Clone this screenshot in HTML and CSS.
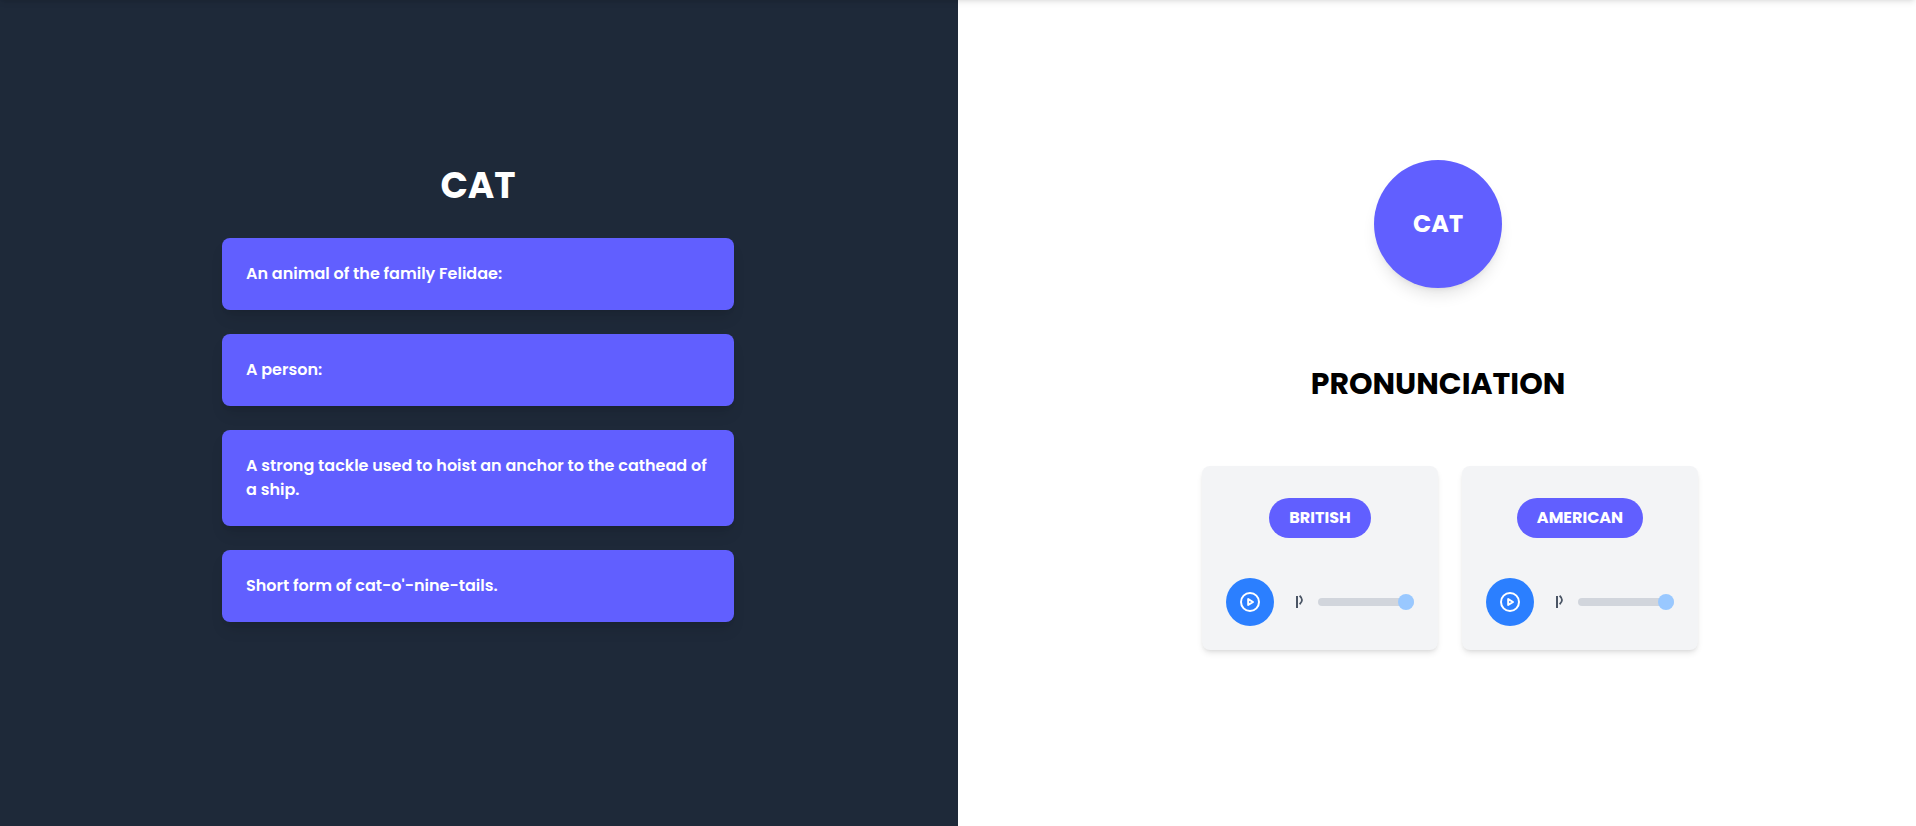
FILE: index.html
```html
<!DOCTYPE html>
<html lang="en">
<head>
<meta charset="utf-8">
<title>Cat</title>
<link rel="stylesheet" href="styles.css">
</head>
<body>
<div class="topbar"></div>
<main class="page">
  <section class="meanings">
    <h1 class="word">CAT</h1>
    <ul class="list">
      <li class="card">An animal of the family Felidae:</li>
      <li class="card">A person:</li>
      <li class="card">A strong tackle used to hoist an anchor to the cathead of a ship.</li>
      <li class="card">Short form of cat-o'-nine-tails.</li>
    </ul>
  </section>
  <section class="sound">
    <div class="circle">CAT</div>
    <h2 class="title">PRONUNCIATION</h2>
    <div class="players">
      <article class="player">
        <div class="pill">BRITISH</div>
        <div class="controls">
          <button class="play" aria-label="Play"><svg width="24" height="24" viewBox="0 0 24 24" fill="none" stroke="currentColor" stroke-width="2" stroke-linecap="round" stroke-linejoin="round"><circle cx="12" cy="12" r="9"/><path d="M10.2 9v6l4.8-3z"/></svg></button>
          <svg class="volume" width="8" height="14" viewBox="0 0 8 14"><path d="M0 1h2v12H0z" fill="currentColor"/><path d="M3.6.8Q8.4 5 3.6 9.2" fill="none" stroke="currentColor" stroke-width="1.8"/></svg>
          <div class="slider"><div class="thumb"></div></div>
        </div>
      </article>
      <article class="player">
        <div class="pill">AMERICAN</div>
        <div class="controls">
          <button class="play" aria-label="Play"><svg width="24" height="24" viewBox="0 0 24 24" fill="none" stroke="currentColor" stroke-width="2" stroke-linecap="round" stroke-linejoin="round"><circle cx="12" cy="12" r="9"/><path d="M10.2 9v6l4.8-3z"/></svg></button>
          <svg class="volume" width="8" height="14" viewBox="0 0 8 14"><path d="M0 1h2v12H0z" fill="currentColor"/><path d="M3.6.8Q8.4 5 3.6 9.2" fill="none" stroke="currentColor" stroke-width="1.8"/></svg>
          <div class="slider"><div class="thumb"></div></div>
        </div>
      </article>
    </div>
  </section>
</main>
</body>
</html>
```
FILE: styles.css
```css
* { box-sizing: border-box; margin: 0; padding: 0; }
body { font-family: Poppins, Inter, sans-serif; background: #fff; overflow: hidden; }
.topbar { position: absolute; top: -21px; left: 0; right: 0; height: 20px; box-shadow: 0 4px 6px -1px rgba(0,0,0,.1), 0 2px 4px -2px rgba(0,0,0,.1); }
.page { display: grid; grid-template-columns: 1fr 1fr; height: 826px; }
.meanings { background: #1e2939; color: #fff; display: flex; flex-direction: column; align-items: center; padding: 166px 2px 0 0; }
.word { font-size: 36px; line-height: 40px; font-weight: 700; margin-bottom: 32px; }
.list { list-style: none; width: 512px; display: flex; flex-direction: column; gap: 24px; }
.card { background: #615fff; border-radius: 8px; padding: 24px; font-size: 16px; line-height: 24px; font-weight: 600; box-shadow: 0 10px 15px -3px rgba(0,0,0,.1), 0 4px 6px -4px rgba(0,0,0,.1); }
.sound { display: flex; flex-direction: column; align-items: center; padding: 160px 0 0 2px; }
.circle { width: 128px; height: 128px; border-radius: 50%; background: #615fff; color: #fff; display: flex; align-items: center; justify-content: center; font-size: 24px; line-height: 32px; padding-bottom: 1px; font-weight: 700; box-shadow: 0 10px 15px -3px rgba(0,0,0,.1), 0 4px 6px -4px rgba(0,0,0,.1); }
.title { margin-top: 78px; font-size: 30px; line-height: 36px; font-weight: 700; color: #000; }
.players { display: flex; gap: 24px; margin-top: 64px; padding-left: 24px; }
.player { width: 236px; height: 184px; background: #f3f4f6; border-radius: 8px; padding: 32px 24px 24px; display: flex; flex-direction: column; align-items: center; box-shadow: 0 4px 6px -1px rgba(0,0,0,.1), 0 2px 4px -2px rgba(0,0,0,.1); }
.pill { height: 40px; padding: 0 20px; border-radius: 20px; background: #615fff; color: #fff; font-size: 16px; font-weight: 700; line-height: 40px; }
.controls { align-self: stretch; display: flex; align-items: center; margin-top: 40px; }
.play { width: 48px; height: 48px; border: 0; border-radius: 50%; background: #2b7fff; color: #fff; display: flex; align-items: center; justify-content: center; }
.volume { color: #4a5565; margin: 0 14px 0 22px; }
.slider { width: 96px; height: 8px; border-radius: 4px; background: #d1d5dc; display: flex; justify-content: flex-end; align-items: center; }
.thumb { flex: none; width: 16px; height: 16px; border-radius: 50%; background: #99c8ff; }
```
